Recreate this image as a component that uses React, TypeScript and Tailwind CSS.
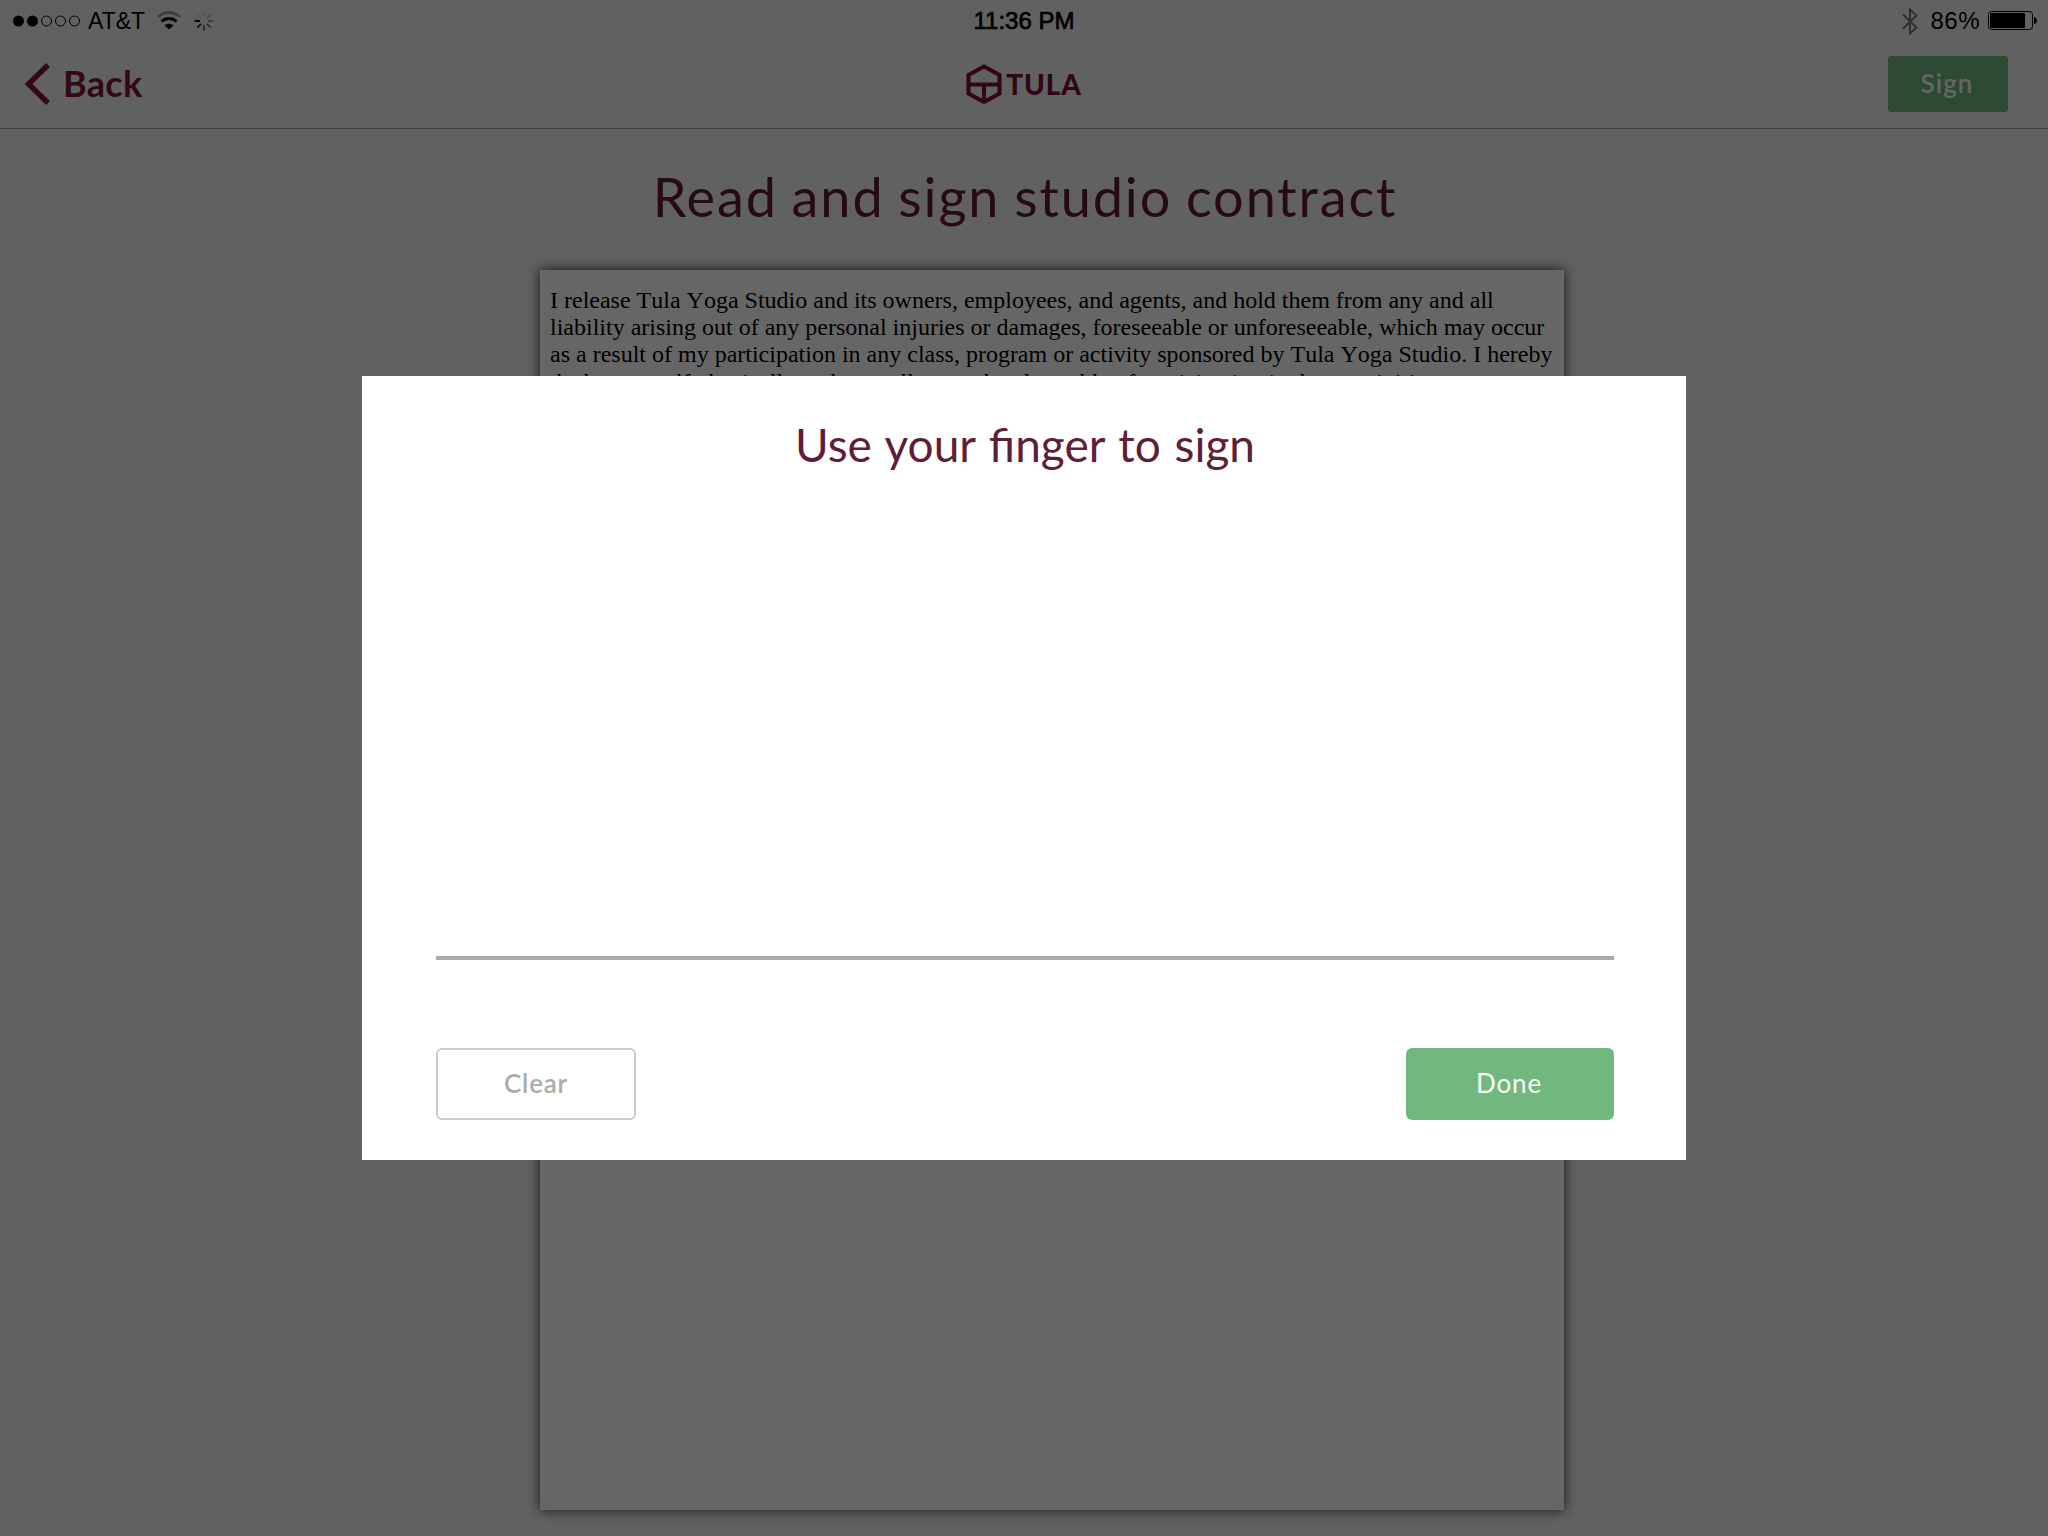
import React from 'react';

const SPINNER_OPACITY = [0.1, 0.25, 0.4, 0.5, 0.6, 0.85, 1, 0.1];

const CONTRACT_LINES = [
  'I release Tula Yoga Studio and its owners, employees, and agents, and hold them from any and all',
  'liability arising out of any personal injuries or damages, foreseeable or unforeseeable, which may occur',
  'as a result of my participation in any class, program or activity sponsored by Tula Yoga Studio. I hereby',
  'declare myself physically and mentally sound and capable of participating in these activities.',
];

const StatusBar: React.FC = () => (
  <div className="grid h-[42px] grid-cols-3 items-center font-['Liberation_Sans',sans-serif] text-[23px] text-black">
    {/* Carrier, wifi and activity spinner */}
    <div className="flex items-center pl-[13px]">
      <svg width="68" height="12" viewBox="0 0 68 12">
        <circle cx="5.5" cy="6" r="5.5" />
        <circle cx="19.5" cy="6" r="5.5" />
        {[33.5, 47.5, 61.5].map((cx) => (
          <circle key={cx} cx={cx} cy="6" r="5" fill="none" stroke="black" />
        ))}
      </svg>
      <span className="ml-[7px]">AT&amp;T</span>
      <svg className="ml-3" width="24" height="20" viewBox="0 0 24 20" fill="none" stroke="black" strokeWidth="2.8">
        <path d="M1 6C7.500 0 16.500 0 23 6" opacity=".35" />
        <path d="M4.500 10.500C8.500 6.500 15.500 6.500 19.500 10.500" />
        <path d="M7.500 14.500C10 12 14 12 16.500 14.500L12 18.500Z" fill="black" stroke="none" />
      </svg>
      <svg className="ml-[13px]" width="20" height="20" viewBox="0 0 20 20" stroke="black" strokeWidth="1.8">
        {SPINNER_OPACITY.map((opacity, i) => (
          <path key={i} d="M10 0.500V6" opacity={opacity} transform={`rotate(${i * 45} 10 10)`} />
        ))}
      </svg>
    </div>
    <span className="text-center text-2xl [-webkit-text-stroke:0.7px_black]">11:36 PM</span>
    {/* Bluetooth and battery */}
    <div className="flex items-center justify-end pr-[11px]">
      <svg width="16" height="27" viewBox="0 0 16 27" fill="none" stroke="black" strokeOpacity=".5" strokeWidth="2">
        <path d="M1 6.500L14.500 19.500L8 25.500V1.500L14.500 7.500L1 20.500" />
      </svg>
      <span className="ml-3 text-2xl tracking-[0.5px]">86%</span>
      <svg className="ml-2" width="49" height="20" viewBox="0 0 49 20">
        <rect x=".5" y=".5" width="44" height="18" rx="3" fill="none" stroke="black" />
        <rect x="2" y="2" width="35" height="15" rx="1" />
        <path d="M46 6C50 7 50 12 46 13Z" />
      </svg>
    </div>
  </div>
);

const Header: React.FC = () => (
  <header className="grid h-[87px] grid-cols-3 items-center border-b border-[#a0a0a0] pb-0.5">
    <button className="flex items-center pl-6 text-left">
      <svg width="27" height="42" viewBox="0 0 27 42" fill="none" stroke="#7f173d" strokeWidth="5.5">
        <path d="M24 2L4.500 21L24 40" />
      </svg>
      <span className="ml-3 pb-0.5 text-4xl font-bold tracking-[0.3px] text-[#7f173d]">Back</span>
    </button>
    <div className="flex items-center justify-center">
      <svg width="36" height="41" viewBox="0 0 36 41" fill="none" stroke="#780f38" strokeWidth="4">
        <path d="M18 2.500L33.500 11V29.500L18 38L2.500 29.500V11ZM2.500 20.500H33.500M18 20.500V38" />
      </svg>
      <span className="ml-1 text-[28px] font-black tracking-[0.8px] text-[#780f38]">TULA</span>
    </div>
    <div className="flex justify-end pr-10">
      <button className="h-14 w-[120px] rounded bg-[#70b87e] pr-0.5 pb-0.5 text-[26px] font-semibold tracking-[1px] text-white">
        Sign
      </button>
    </div>
  </header>
);

const SignatureModal: React.FC = () => (
  <div className="fixed inset-0 flex items-center justify-center bg-black/60">
    <div className="flex h-[784px] w-[1324px] flex-col bg-white pr-[72px] pb-10 pl-[74px]">
      <h2 className="pt-[41px] text-center text-[46px] leading-[56px] [word-spacing:2px] text-[#5f1d37]">
        Use your finger to sign
      </h2>
      {/* Signing area */}
      <div className="flex-1 border-b-4 border-[#aaa]" />
      <div className="mt-[88px] flex justify-between">
        <button className="h-[72px] w-[200px] rounded-md border-2 border-[#ccc] pb-0.5 text-[26px] font-semibold tracking-[0.8px] text-[#aaa]">
          Clear
        </button>
        <button className="h-[72px] w-[208px] rounded-md bg-[#70b87e] pr-0.5 pb-0.5 text-[26px] tracking-[0.9px] text-white">
          Done
        </button>
      </div>
    </div>
  </div>
);

const App: React.FC = () => {
  return (
    <div className="flex h-screen flex-col overflow-hidden bg-[#f3f3f3] font-[Lato,sans-serif]">
      <StatusBar />
      <Header />
      <h1 className="mt-9 pl-0.5 text-center text-[54px] leading-[64px] tracking-[1.9px] [word-spacing:-2px] text-[#5f1b33]">
        Read and sign studio contract
      </h1>
      <div className="mt-[41px] ml-[540px] h-[1240px] w-[1024px] bg-white px-2.5 pt-[17px] font-['Liberation_Serif',serif] text-2xl leading-[27.2px] text-black shadow-[0_0_12px_rgba(0,0,0,0.8)]">
        {CONTRACT_LINES.map((line) => (
          <p key={line} className="whitespace-nowrap [font-kerning:none]">{line}</p>
        ))}
      </div>
      <SignatureModal />
    </div>
  );
};

export default App;
